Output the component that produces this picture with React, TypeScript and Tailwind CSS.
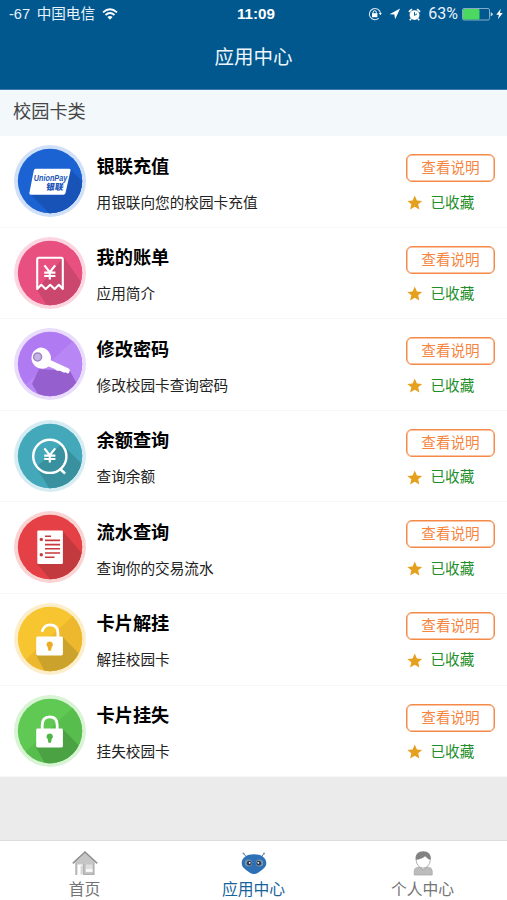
import type { ReactNode } from "react";

type AppItem = {
  title: string;
  desc: string;
  ring: string;
  color: string;
  facet: string;
  shade: string;
  shadow: string;
  glyph: ReactNode;
};

const yen = (
  <path d="M30.4 28.4l5.4 6.8 5.4-6.8M30.2 35.6h11.2M30.2 39h11.2M35.8 35v7.6" fill="none" stroke="#fff" strokeWidth="2.2" />
);

const apps: AppItem[] = [
  {
    title: "银联充值",
    desc: "用银联向您的校园卡充值",
    ring: "#cfe0f8",
    color: "#1b62d3",
    facet: "#1b62d3",
    shade: "#1853b8",
    shadow: "M16 49L56 24L76 44V76H43Z",
    glyph: (
      <>
        <path d="M21.6 23.8h33.6q1.8 0 1.3 1.8l-5 22.4q-.4 1.8-2.2 1.8H16.8q-1.8 0-1.4-1.8l4.4-22.4q.4-1.8 1.8-1.8z" fill="#fff" />
        <text x="19.8" y="36.4" fontSize="8.4" fontWeight="700" fontStyle="italic" textLength="33.4" lengthAdjust="spacingAndGlyphs" fill="#1b55b8" fontFamily="Liberation Sans, sans-serif">UnionPay</text>
        <text x="0" y="0" transform="translate(31.8 44.6) skewX(-8)" fontSize="8.6" fontWeight="900" fill="#1b55b8" fontFamily="Noto Sans CJK SC, sans-serif">银联</text>
      </>
    ),
  },
  {
    title: "我的账单",
    desc: "应用简介",
    ring: "#fcd5e0",
    color: "#e8507f",
    facet: "#e8507f",
    shade: "#cb476e",
    shadow: "M23 53L49.5 20L72 52V76H38Z",
    glyph: (
      <>
        <path d="M23.2 52V22.2q0-1.5 1.5-1.5h22.6q1.5 0 1.5 1.5V52l-3.9-4.2-4.3 4.2-4.4-4.2-4.5 4.2-4.4-4.2z" fill="none" stroke="#fff" strokeWidth="2.1" strokeLinejoin="round" />
        {yen}
      </>
    ),
  },
  {
    title: "修改密码",
    desc: "修改校园卡查询密码",
    ring: "#eadcfc",
    color: "#b07bf2",
    facet: "#b886f5",
    shade: "#9560cd",
    shadow: "M25 41L18 56L30 76H60L62 54L56 43Z",
    glyph: (
      <>
        <path d="M26.3 19.6a10.6 10.6 0 0 1 10.5 12.6l17.4 8.1q2 .9 1.5 2.6l-.8 2q-.6.8-1.6.3l-2.2-1-1 .5-4.8-2.1-1.2.5-2.3-1-1-1-6.2-2.7a10.6 10.6 0 1 1-8.3-18.8z" fill="#fff" />
        <circle cx="23.6" cy="28.9" r="4" fill="#c3b4e0" stroke="#a184d0" strokeWidth="1.5" />
      </>
    ),
  },
  {
    title: "余额查询",
    desc: "查询余额",
    ring: "#d5edf2",
    color: "#43a9ba",
    facet: "#43a9ba",
    shade: "#39909f",
    shadow: "M22 47L48 24L76 52V76H40Z",
    glyph: (
      <>
        <circle cx="35.8" cy="36.3" r="16.6" fill="none" stroke="#fff" strokeWidth="2.4" />
        <path d="M45.5 48.5l5.6 5" stroke="#fff" strokeWidth="2.6" />
        {yen}
      </>
    ),
  },
  {
    title: "流水查询",
    desc: "查询你的交易流水",
    ring: "#fad3d3",
    color: "#e54045",
    facet: "#e54045",
    shade: "#c33a3e",
    shadow: "M23 53L48.7 20L76 52V76H43Z",
    glyph: (
      <>
        <rect x="23.3" y="19.4" width="25.6" height="33.6" rx="1.2" fill="#fff" />
        <path d="M31 25.2h6M31 29.4h15M31 33.6h15M31 37.8h15M31 42h15M31 46.2h9.5" stroke="#c9383d" strokeWidth="1.6" />
        <circle cx="27.3" cy="28.4" r="1.7" fill="#c9383d" />
        <circle cx="27.3" cy="43.8" r="1.7" fill="#c9383d" />
      </>
    ),
  },
  {
    title: "卡片解挂",
    desc: "解挂校园卡",
    ring: "#fdeecb",
    color: "#f6c52f",
    facet: "#eeb82e",
    shade: "#cba22c",
    shadow: "M22 52L48.7 34L76 62V76H35Z",
    glyph: (
      <>
        <rect x="22.2" y="33.6" width="26.7" height="18.8" rx="1.4" fill="#fff" />
        <path d="M28.3 27.8q2-6 7.6-6 8 0 8 8.2v5" fill="none" stroke="#fff" strokeWidth="2.8" strokeLinecap="round" />
        <path d="M35.7 38.4a3.2 3.2 0 0 1 2 5.7l-.7 3.6h-2.6l-.7-3.6a3.2 3.2 0 0 1 2-5.7z" fill="#ebae22" />
      </>
    ),
  },
  {
    title: "卡片挂失",
    desc: "挂失校园卡",
    ring: "#d9f3d5",
    color: "#5fc953",
    facet: "#57bd4c",
    shade: "#4ba242",
    shadow: "M22 52L48.7 34L76 62V76H35Z",
    glyph: (
      <>
        <rect x="22.2" y="33.6" width="26.7" height="18.8" rx="1.4" fill="#fff" />
        <path d="M28.2 35v-4.7q0-8.5 7.5-8.5t7.5 8.5V35" fill="none" stroke="#fff" strokeWidth="2.8" />
        <path d="M35.7 38.4a3.2 3.2 0 0 1 2 5.7l-.7 3.6h-2.6l-.7-3.6a3.2 3.2 0 0 1 2-5.7z" fill="#4fb545" />
      </>
    ),
  },
];

function AppIcon({ app, id }: { app: AppItem; id: string }) {
  return (
    <svg viewBox="0 0 72 72" className="mt-[9px] size-[72px] shrink-0">
      <clipPath id={id}>
        <circle cx="36" cy="36" r="32.2" />
      </clipPath>
      <circle cx="36" cy="36" r="36" fill={app.ring} />
      <g clipPath={`url(#${id})`}>
        <path d="M0 0h72v72H0z" fill={app.color} />
        <path d="M62 10L76 24V72H0V68L22 47Z" fill={app.facet} />
        <path d={app.shadow} fill={app.shade} />
      </g>
      {app.glyph}
    </svg>
  );
}

function AppRow({ app, index }: { app: AppItem; index: number }) {
  return (
    <div className="flex h-[91.6px] border-b border-[#f7f7f7] bg-white pl-[14px] pr-3">
      <AppIcon app={app} id={`app-icon-${index}`} />
      <div className="ml-[10.5px] flex-1 whitespace-nowrap">
        <div className="mt-[18.5px] text-[18.2px] font-bold leading-6 text-black">{app.title}</div>
        <div className="mt-[14px] text-[14.65px] leading-5 text-[#222]">{app.desc}</div>
      </div>
      <div className="w-[89px] whitespace-nowrap">
        <div className="mt-[18px] flex h-7 items-center justify-center rounded-md border border-[#f58a48] text-[14.6px] leading-5 text-[#f5853f] shadow-[inset_0_0_0_0.5px_#f58a48]">
          查看说明
        </div>
        <div className="mt-[10.5px] flex items-center gap-2 pl-px text-[14.6px] leading-5 text-[#1f8f2b]">
          <svg viewBox="0 0 24 24" className="size-[15.5px] shrink-0">
            <path d="M12 .8l3.3 7.6 8.2.7-6.2 5.4 1.9 8.1-7.2-4.3-7.2 4.3 1.9-8.1L.5 9.1l8.2-.7z" fill="#e5a01d" />
          </svg>
          已收藏
        </div>
      </div>
    </div>
  );
}

function StatusBar() {
  return (
    <div className="grid h-7 grid-cols-3 items-center pl-[9px] pr-[4px] text-[14.6px] leading-5 text-[#e9f2fa]">
      <div className="flex items-center whitespace-nowrap">
        -67&nbsp;
        <span className="ml-[2.5px]">中国电信</span>
        <svg viewBox="0 0 16 12" className="ml-[7px] h-3 w-4">
          <path d="M1 4.3q7-6.2 14 0M3.5 7q4.5-3.9 9 0" fill="none" stroke="#fff" strokeWidth="1.8" />
          <path d="M8 11.8L5.4 9q2.6-2.1 5.2 0z" fill="#fff" />
        </svg>
      </div>
      <div className="text-center text-[15.2px] font-bold text-white">11:09</div>
      <div className="flex items-center justify-end whitespace-nowrap">
        {/* rotation lock */}
        <svg viewBox="0 0 14 14" className="size-[14px]" fill="none" stroke="#cfe0ee">
          <path d="M10.8 11.2a5.6 5.6 0 1 1 1.7-5" strokeWidth="1.1" />
          <path d="M10.7 6h3.2l-1.5 2.2z" fill="#e9f2fa" stroke="none" />
          <rect x="4" y="6.2" width="5.4" height="4" fill="#fff" stroke="none" />
          <path d="M5.1 6.5V5.3a1.6 1.6 0 0 1 3.2 0v1.2" stroke="#fff" />
        </svg>
        <svg viewBox="0 0 12 12" className="ml-[7.5px] size-[11.5px]">
          <path d="M11.6.5L.6 6.5l5 .3.8 5z" fill="#fff" />
        </svg>
        {/* alarm */}
        <svg viewBox="0 0 14 14" className="ml-[7.5px] size-[13px]">
          <circle cx="7" cy="7.6" r="5.3" fill="#fff" />
          <path d="M1 4.2l3.2-3M13 4.2l-3.200-3M3.2 11.5L2 13.1M10.8 11.5l1.2 1.6" stroke="#fff" strokeWidth="1.8" />
          <path d="M7 4.3V8l2.7-1.7" fill="none" stroke="#00568f" />
        </svg>
        <span className="ml-[7px] font-[Roboto,sans-serif] text-[16px]">63%</span>
        <svg viewBox="0 0 32 14" className="ml-[4px] h-[14px] w-[32px]">
          <rect x=".5" y="1.5" width="27" height="11.5" rx="1.5" fill="none" stroke="#84abc9" />
          <rect x="1" y="2" width="16.5" height="10.5" rx="1" fill="#4cd95f" />
          <path d="M28.7 5.3q2 .5 2 2t-2 2z" fill="#c5dae9" />
        </svg>
        <svg viewBox="0 0 8 12" className="ml-[2px] h-[12px] w-[7px]">
          <path d="M5.5 0L.3 6.8h3L2.2 12l5.500-7.100H4.500z" fill="#fff" />
        </svg>
      </div>
    </div>
  );
}

function HomeIcon() {
  return (
    <svg viewBox="0 0 28 26" className="h-[26px] w-[28px]">
      <path d="M4.5 12L14 3.5l9.500 8.500v13h-19z" fill="#c6c6c6" />
      <path d="M6.5 14.500H12V25H6.500z" fill="#fff" />
      <path d="M9.500 16l2.500-1v9l-2.500 1z" fill="#d8d8d8" />
      <path d="M14.800 14.500h6.700v7h-6.700z" fill="#dedede" />
      <path d="M14.800 19h6.700v3h-6.700z" fill="#f7f7f7" />
      <path d="M5 13v12M22.800 13v12M12.800 14v11M13 24.300h10" stroke="#aaa" />
      <path d="M1.800 13.300L14 2.200l12.200 11.100" fill="none" stroke="#929292" strokeWidth="1.800" />
    </svg>
  );
}

function RobotIcon() {
  return (
    <svg viewBox="0 0 28 26" className="h-[26px] w-[28px]">
      <path d="M7 7.500L3.500 3.500M21 7.500L24 3.500" stroke="#5279a3" />
      <circle cx="3.500" cy="3.500" r="1" fill="#7890ac" />
      <circle cx="24" cy="3.500" r="1" fill="#7890ac" />
      <path d="M14 4.200c7.200 0 12.300 3.400 12.300 9 0 4.200-4.600 6.800-8.200 9.500q-4.100 2.500-8.200 0c-3.600-2.700-8.200-5.300-8.200-9.500C1.700 7.600 6.800 4.200 14 4.200z" fill="#2d70b5" />
      <ellipse cx="8.500" cy="13" rx="3.700" ry="3.500" fill="#7f93a8" />
      <ellipse cx="19.500" cy="13" rx="3.700" ry="3.500" fill="#7f93a8" />
      <circle cx="9.200" cy="13.200" r="2.400" fill="#263d5a" />
      <circle cx="18.800" cy="13.200" r="2.400" fill="#263d5a" />
      <circle cx="9.700" cy="12.800" r=".9" fill="#fff" />
      <circle cx="18.300" cy="12.800" r=".9" fill="#fff" />
    </svg>
  );
}

function PersonIcon() {
  return (
    <svg viewBox="0 0 28 26" className="h-[26px] w-[28px]">
      <path d="M5.200 25v-4q0-3.400 4-3.800h10q4 .4 4 3.800v4z" fill="#bcbcbc" stroke="#a5a5a5" strokeWidth=".7" />
      <path d="M10.500 17.300l3.700 2.500 3.700-2.500" fill="#e8e8e8" stroke="#999" strokeWidth=".7" />
      <ellipse cx="14.200" cy="10.200" rx="7" ry="7.800" fill="#fff" stroke="#aaa" strokeWidth=".9" />
      <path d="M6.700 9.800C5.700 4.500 9.500 1.200 14.200 1.200s8.500 3.300 7.500 8.600q-3-.3-5.500-3.500Q12 9.700 6.700 9.800z" fill="#828282" />
    </svg>
  );
}

const tabs = [
  { label: "首页", icon: <HomeIcon />, active: false },
  { label: "应用中心", icon: <RobotIcon />, active: true },
  { label: "个人中心", icon: <PersonIcon />, active: false },
];

export default function App() {
  return (
    <div className="flex h-[900px] w-[507px] flex-col overflow-hidden bg-[#ebebeb] font-['Liberation_Sans','Noto_Sans_CJK_SC',sans-serif]">
      <header className="h-[90px] shrink-0 border-b border-[#3d7cab] bg-[#00588f]">
        <StatusBar />
        <h1 className="mt-[15px] text-center text-[19.5px] leading-7 text-[#edf5fb]">应用中心</h1>
      </header>

      <h2 className="flex h-[46px] shrink-0 items-center bg-[#f3f8fb] pb-px pl-[13px] text-[18.2px] text-[#454545]">校园卡类</h2>

      <main className="flex-1">
        {apps.map((app, i) => (
          <AppRow key={app.title} app={app} index={i} />
        ))}
      </main>

      <nav className="grid h-[60px] shrink-0 grid-cols-3 border-t border-[#dcdcdc] bg-white">
        {tabs.map(tab => (
          <div key={tab.label} className="flex flex-col items-center pt-[9px]">
            {tab.icon}
            <span className={tab.active ? "mt-[3.5px] text-[15.8px] leading-5 text-[#17649b]" : "mt-[3.5px] text-[15.8px] leading-5 text-[#747474]"}>
              {tab.label}
            </span>
          </div>
        ))}
      </nav>
    </div>
  );
}
